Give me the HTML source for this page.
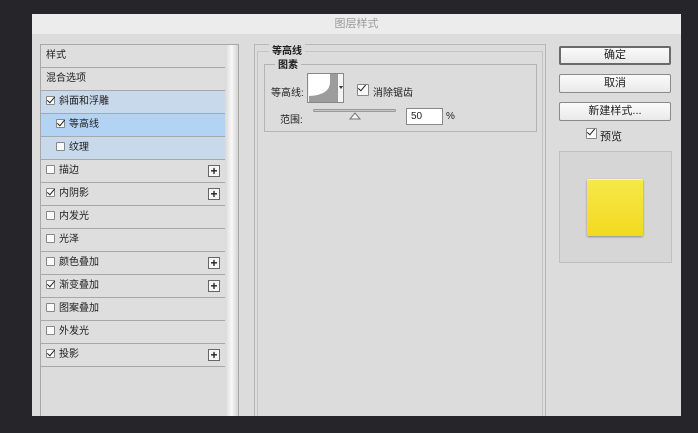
<!DOCTYPE html>
<html><head><meta charset="utf-8"><style>
*{margin:0;padding:0;box-sizing:border-box}
body{width:698px;height:433px;background:#25252a;position:relative;overflow:hidden;font-family:"Liberation Sans","Noto Sans CJK SC",sans-serif;font-size:10px;color:#1e1e1e}
.a{position:absolute}
.row{position:absolute;left:41px;width:184px;height:23px;border-bottom:1px solid #a8a8a8;background:#dedede;line-height:22px;padding-left:5px}
.cb{display:inline-block;width:9px;height:9px;border:1px solid #888;background:#fafafa;vertical-align:-1px;margin-right:4px;border-radius:1px;position:relative}
.cb.k::after{content:"";position:absolute;left:2px;top:-2px;width:3px;height:7px;border:solid #222;border-width:0 1.5px 1.5px 0;transform:rotate(40deg)}
.plus{position:absolute;right:5px;top:5px;width:12px;height:12px;border:1px solid #666;background:#f6f6f6;font-weight:bold;font-size:12px;line-height:10px;text-align:center}
.btn{position:absolute;left:559px;width:112px;height:19px;border:1px solid #8a8a8a;border-radius:2px;background:linear-gradient(#fbfbfb,#e9e9e9);text-align:center;line-height:17px;font-size:11px}
</style></head><body>
<div class="a" style="left:32px;top:14px;width:649px;height:402px;background:#dcdcdc"></div>
<div class="a" style="left:32px;top:14px;width:649px;height:20px;background:#ececec;text-align:center;line-height:20px;color:#9a9a9a;font-size:11px">图层样式</div>
<div class="a" style="left:40px;top:44px;width:199px;height:372px;border:1px solid #a8a8a8;border-bottom:none;background:#dcdcdc"></div>
<div class="a" style="left:225px;top:45px;width:13px;height:371px;background:linear-gradient(90deg,#d8d8d8,#f8f8f8 50%,#d4d4d4)"></div>
<div class="row" style="top:45px">样式</div>
<div class="row" style="top:68px">混合选项</div>
<div class="row" style="top:91px;background:#c9d9ec"><span class="cb k"></span>斜面和浮雕</div>
<div class="row" style="top:114px;background:#b3d3f5;padding-left:15px"><span class="cb k"></span>等高线</div>
<div class="row" style="top:137px;background:#c9d9ec;padding-left:15px"><span class="cb"></span>纹理</div>
<div class="row" style="top:160px"><span class="cb"></span>描边<span class="plus">+</span></div>
<div class="row" style="top:183px"><span class="cb k"></span>内阴影<span class="plus">+</span></div>
<div class="row" style="top:206px"><span class="cb"></span>内发光</div>
<div class="row" style="top:229px"><span class="cb"></span>光泽</div>
<div class="row" style="top:252px"><span class="cb"></span>颜色叠加<span class="plus">+</span></div>
<div class="row" style="top:275px"><span class="cb k"></span>渐变叠加<span class="plus">+</span></div>
<div class="row" style="top:298px"><span class="cb"></span>图案叠加</div>
<div class="row" style="top:321px"><span class="cb"></span>外发光</div>
<div class="row" style="top:344px"><span class="cb k"></span>投影<span class="plus">+</span></div>
<div class="a" style="left:254px;top:44px;width:292px;height:372px;border:1px solid #b8b8b8;border-bottom:none"></div>
<div class="a" style="left:257px;top:51px;width:286px;height:365px;border:1px solid #c4c4c4;border-bottom:none"></div>
<div class="a" style="left:269px;top:42px;background:#dcdcdc;padding:0 3px;font-weight:bold">等高线</div>
<div class="a" style="left:264px;top:64px;width:273px;height:68px;border:1px solid #b4b4b4"></div>
<div class="a" style="left:275px;top:56px;background:#dcdcdc;padding:0 3px;font-weight:bold">图素</div>
<div class="a" style="left:271px;top:84px">等高线:</div>
<div class="a" style="left:307px;top:73px;width:37px;height:30px;border:1px solid #888;background:#f4f4f4">
<svg width="28" height="28" style="position:absolute;left:1px;top:0"><rect width="28" height="28" fill="#9c9c9c"/><path d="M0 0H21V8Q21 21 0 22Z" fill="#fff"/></svg>
<div class="a" style="left:29px;top:0;width:1px;height:28px;background:#999"></div>
<div class="a" style="left:31px;top:12px;border:2px solid transparent;border-top:3px solid #333"></div></div>
<div class="a" style="left:357px;top:84px"><span class="cb k" style="width:12px;height:12px"></span></div>
<div class="a" style="left:373px;top:84px">消除锯齿</div>
<div class="a" style="left:280px;top:111px">范围:</div>
<div class="a" style="left:313px;top:109px;width:83px;height:3px;border:1px solid #999;border-radius:2px;background:#c8c8c8"></div>
<svg class="a" style="left:349px;top:112px" width="12" height="8"><path d="M6 1L11 7H1Z" fill="#f4f4f4" stroke="#777"/></svg>
<div class="a" style="left:406px;top:108px;width:37px;height:17px;border:1px solid #888;background:#fff;padding-left:4px;line-height:15px">50</div>
<div class="a" style="left:446px;top:111px">%</div>
<div class="btn" style="top:46px;border:2px solid #6a6a6a;line-height:15px">确定</div>
<div class="btn" style="top:74px">取消</div>
<div class="btn" style="top:102px">新建样式...</div>
<div class="a" style="left:586px;top:128px"><span class="cb k" style="width:11px;height:11px"></span></div>
<div class="a" style="left:600px;top:128px;font-size:11px">预览</div>
<div class="a" style="left:559px;top:151px;width:113px;height:112px;border:1px solid #c0c0c0;background:#d6d6d6"></div>
<div class="a" style="left:587px;top:179px;width:56px;height:57px;border-radius:2px;background:linear-gradient(#f7e84a,#f2da1e);box-shadow:0 1px 2px rgba(0,0,0,.35),inset 0 1px 0 #fff6a0"></div>
</body></html>
